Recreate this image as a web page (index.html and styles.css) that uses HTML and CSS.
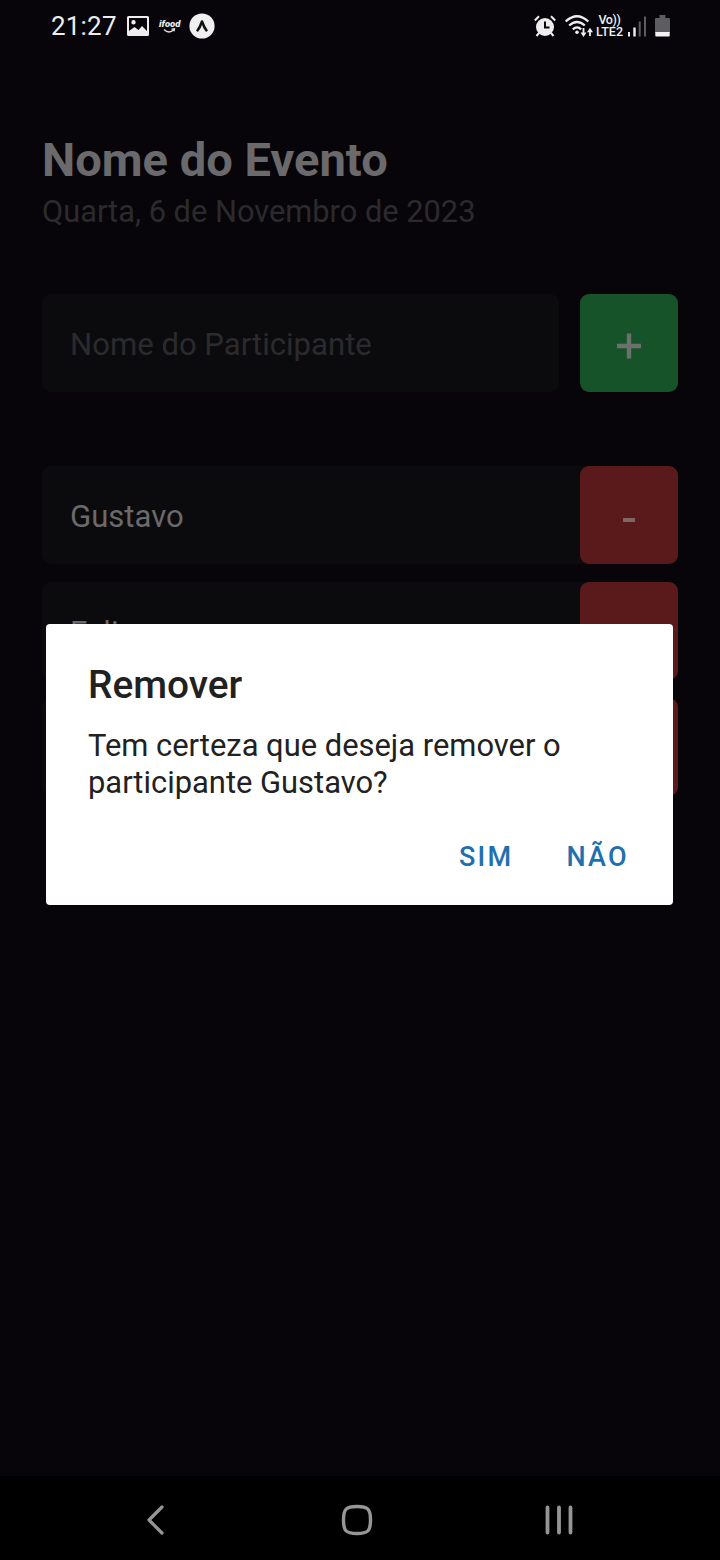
FILE: index.html
```
<!DOCTYPE html>
<html lang="pt-BR">
<head>
<meta charset="utf-8">
<meta name="viewport" content="width=device-width">
<title>Nome do Evento</title>
<link rel="stylesheet" href="styles.css">
</head>
<body>
<div class="screen">
  <header class="status">
    <div class="status-left">
      <span class="clock">21:27</span>
      <svg class="ic-photo" width="22" height="20" viewBox="0 0 22 20"><path fill="#eee" fill-rule="evenodd" d="M1.500 0h19Q22 0 22 1.500v17Q22 20 20.500 20h-19Q0 20 0 18.500v-17Q0 0 1.500 0zM2 2v13l5.500-4 4 3 3.500-4 5 5V2zM6.500 4a2.200 2.200 0 1 1 0 4.400 2.200 2.200 0 0 1 0-4.400z"/></svg>
      <span class="ifood"><span>ifood</span><svg width="14" height="6" viewBox="0 0 14 6"><path d="M1 1.500q5 5 10 0M8.500 1.200l3-.4-.5 2.500" fill="none" stroke="#ddd" stroke-width="1.300"/></svg></span>
      <svg class="ic-expo" width="26" height="26" viewBox="0 0 26 26"><circle cx="13" cy="13" r="12.600" fill="#f0f0f0"/><path d="M8 18.300Q11 14.500 13 8.500q2 6 5 9.800" fill="none" stroke="#111" stroke-width="2.500" stroke-linejoin="round"/></svg>
    </div>
    <div class="status-right">
      <svg class="ic-alarm" width="22" height="22" viewBox="0 0 22 22"><circle cx="11" cy="12" r="9" fill="#eee"/><path d="M.8 5.500 5 1.200M21.200 5.500 17 1.200M5 18l-2.500 3M17 18l2.500 3" stroke="#eee" stroke-width="2"/><path d="M11 6.500v6h4.500" fill="none" stroke="#09080b" stroke-width="2"/></svg>
      <svg class="ic-wifi" width="28" height="23" viewBox="0 0 28 23"><g fill="none" stroke="#eee" stroke-width="2.300"><path d="M.7 6.500q11.300-10.500 22.600 0M4.200 10.500q7.800-7 15.600 0M7.800 14.300q4.200-3.800 8.400 0"/><path d="M18.500 13v7M25 21v-6" stroke-width="1.800"/></g><circle cx="12" cy="17.200" r="1.800" fill="#eee"/><path d="M15.500 17.500h6l-3 4.500zM22 17.200h6L25 12.700z" fill="#eee"/></svg>
      <span class="volte"><span class="vo">Vo))</span><span>LTE2</span></span>
      <svg class="ic-signal" width="18" height="21" viewBox="0 0 18 21"><path fill="#eee" d="M0 16h2v4.500H0zM5.300 11.500h2.400v9H5.300z"/><path fill="#5d5d5f" d="M10.700 5.500h2v15h-2zM16 .5h2v20h-2z"/></svg>
      <svg class="ic-battery" width="15" height="22" viewBox="0 0 15 22"><path fill="#5d5d5f" d="M4.500 0h6v3H14q1 0 1 1v14H0V4q0-1 1-1h3.500z"/><path fill="#f2f2f2" d="M.3 17h14.400v3.800q0 .7-.7.700H1q-.7 0-.7-.7z"/></svg>
    </div>
  </header>

  <main class="event">
    <h1 class="title">Nome do Evento</h1>
    <p class="date">Quarta, 6 de Novembro de 2023</p>
    <div class="form">
      <div class="input">Nome do Participante</div>
      <div class="btn add"><svg width="24" height="26" viewBox="0 0 24 26"><path d="M0 13h24M12 .5v25" stroke="#6d716e" stroke-width="4.400"/></svg></div>
    </div>
    <div class="list">
      <div class="item"><span class="name">Gustavo</span><div class="btn remove"><i class="minus"></i></div></div>
      <div class="item"><span class="name">Felipe</span><div class="btn remove"><i class="minus"></i></div></div>
      <div class="item"><span class="name"></span><div class="btn remove"><i class="minus"></i></div></div>
    </div>
  </main>

  <nav class="nav">
    <svg width="18" height="30" viewBox="0 0 18 30"><path d="M16 2 3 15l13 13" fill="none" stroke="#969696" stroke-width="3.200" stroke-linecap="round" stroke-linejoin="round"/></svg>
    <svg class="home" width="32" height="32" viewBox="0 0 32 32"><path d="M16 2.500C27 2.500 29.500 5 29.500 16S27 29.500 16 29.500 2.500 27 2.500 16 5 2.500 16 2.500z" fill="none" stroke="#969696" stroke-width="3.400"/></svg>
    <svg width="28" height="30" viewBox="0 0 28 30"><path d="M2.500 2.500v25M14 2.500v25M25.500 2.500v25" stroke="#969696" stroke-width="3.800" stroke-linecap="round"/></svg>
  </nav>

  <section class="dialog">
    <h2 class="dialog-title">Remover</h2>
    <p class="dialog-text">Tem certeza que deseja remover o<br>participante Gustavo?</p>
    <div class="actions"><span class="yes">SIM</span><span class="no">NÃO</span></div>
  </section>
</div>
</body>
</html>
```
FILE: styles.css
```
* { box-sizing: border-box; }
body { margin: 0; background: #070509; }
h1, h2, p { margin: 0; }
svg { display: block; flex: none; }
.screen {
  position: relative;
  width: 720px;
  height: 1560px;
  display: flex;
  flex-direction: column;
  background: #070509;
  font-family: Roboto, "Liberation Sans", sans-serif;
  overflow: hidden;
}
.status {
  height: 52px;
  padding: 0 51px;
  display: flex;
  justify-content: space-between;
  align-items: center;
  color: #eee;
}
.status-left, .status-right { display: flex; align-items: center; }
.clock { width: 76px; font-size: 26px; line-height: 52px; letter-spacing: 0.2px; white-space: nowrap; }
.ifood { width: 24px; margin: 0 6px 0 10px; font-size: 9.5px; line-height: 9px; font-weight: 900; font-style: italic; }
.ifood span { display: block; }
.ifood svg { margin: 0 0 0 4px; }
.ic-wifi { margin-left: 9px; }
.volte { width: 29px; margin-left: 2px; display: flex; flex-direction: column; align-items: center; font-size: 12.5px; line-height: 12px; font-weight: 500; }
.vo { letter-spacing: -0.4px; }
.ic-signal { margin-left: 4px; }
.ic-battery { margin-left: 9px; margin-right: -1px; }
.event { flex: 1; padding: 84px 42px 0; }
.title { font-size: 47.1px; line-height: 48px; font-weight: 700; color: #6a696b; white-space: nowrap; }
.date { margin-top: 8px; font-size: 30.8px; line-height: 39px; color: #2b2a2d; white-space: nowrap; }
.form { display: flex; gap: 21px; margin-top: 63px; }
.input { flex: 1; height: 98px; padding-left: 28px; border-radius: 9px; background: #0b0b0d; color: #2b2a2d; font-size: 31.1px; line-height: 101px; white-space: nowrap; }
.btn { flex: none; width: 98px; height: 98px; border-radius: 9px; display: flex; align-items: center; justify-content: center; }
.add { background: #165329; padding-top: 6px; }
.remove { background: #5a191b; }
.minus { width: 12px; height: 4px; margin-top: 9px; background: #826465; }
.list { margin-top: 74px; display: flex; flex-direction: column; gap: 18px; }
.item { height: 98px; display: flex; background: #0b0b0d; border-radius: 9px; }
.name { flex: 1; padding-left: 28px; font-size: 31.1px; line-height: 101px; color: #6a696b; }
.nav { height: 84px; padding: 4px 147px 0 146px; display: flex; align-items: center; justify-content: space-between; background: #000; }
.home { margin-left: 5px; }
.dialog { position: absolute; left: 46px; top: 624px; width: 627px; height: 281px; padding: 36px 42px 0; border-radius: 4px; background: #fff; color: #212121; }
.dialog-title { font-size: 38.8px; line-height: 50px; font-weight: 500; }
.dialog-text { margin-top: 17px; font-size: 30.9px; line-height: 37px; white-space: nowrap; }
.actions { display: flex; justify-content: flex-end; gap: 53px; margin-top: 36px; padding-right: 2px; font-size: 27px; line-height: 40px; font-weight: 500; letter-spacing: 2.3px; color: #1f70ae; }
```
